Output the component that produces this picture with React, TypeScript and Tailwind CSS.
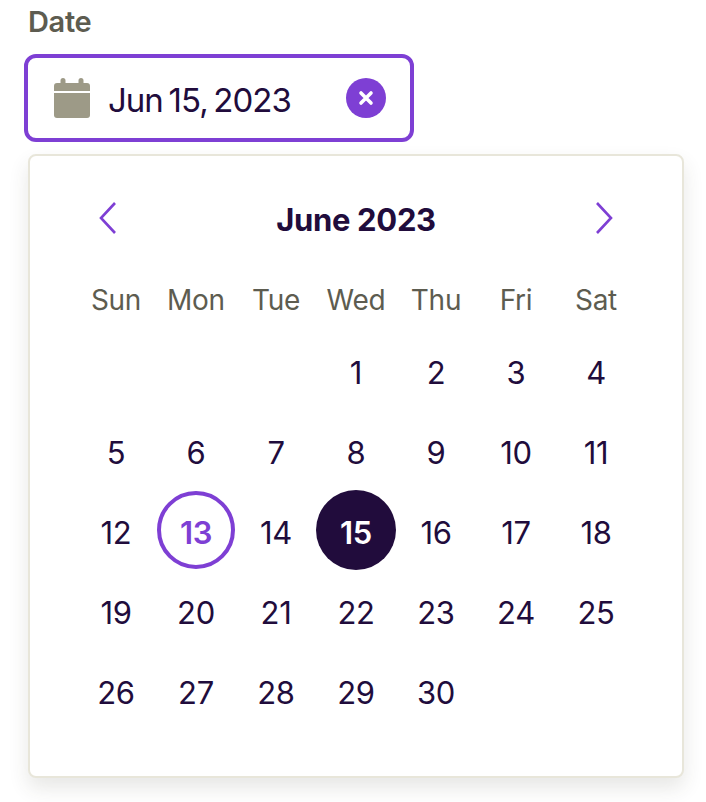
const weekdays = ['Sun', 'Mon', 'Tue', 'Wed', 'Thu', 'Fri', 'Sat'];

const days: (number | null)[] = [null, null, null, ...Array.from({ length: 30 }, (_, i) => i + 1)];

const Day = ({ day }: { day: number | null }) => {
  if (day === null) return <div className="h-20" />;
  if (day === 13) {
    return (
      <div className="h-20 flex items-center justify-center">
        <span className="w-[78px] h-[78px] -mt-1 pt-1 rounded-full border-4 border-[#7e3fd4] flex items-center justify-center font-semibold text-[#7e3fd4]">
          {day}
        </span>
      </div>
    );
  }
  if (day === 15) {
    return (
      <div className="h-20 flex items-center justify-center">
        <span className="w-20 h-20 -mt-1 pt-1 rounded-full bg-[#210c3c] flex items-center justify-center font-semibold text-white">
          {day}
        </span>
      </div>
    );
  }
  return <div className="h-20 flex items-center justify-center text-[#210c3c]">{day}</div>;
};

export default function App() {
  return (
    <div className="w-[706px] h-[802px] overflow-hidden bg-white pl-6 font-['Inter',sans-serif] tracking-[-0.02em]">
      <div className="pl-[4px] h-[54px] pt-[5px] text-[29px] leading-[34px] font-semibold text-[#5d5c50]">Date</div>

      <div className="w-[390px] h-[88px] border-4 border-[#7e3fd4] rounded-xl flex items-center pl-[26px] pr-[24px]">
        <svg width="36" height="40" viewBox="0 0 36 40" className="shrink-0 -mt-px">
          <path
            d="M9 0a2.5 2.5 0 0 1 2.5 2.5V5h13V2.5a2.5 2.5 0 0 1 5 0V5H33a3 3 0 0 1 3 3v5H0V8a3 3 0 0 1 3-3h3.5V2.5A2.5 2.5 0 0 1 9 0z"
            fill="#9d9a87"
          />
          <path d="M0 15h36v22a3 3 0 0 1-3 3H3a3 3 0 0 1-3-3z" fill="#9d9a87" />
        </svg>
        <span className="ml-[18px] pt-1 text-[33px] leading-none text-[#210c3c] tracking-[-0.03em] [word-spacing:-0.08em]">Jun 15, 2023</span>
        <span className="ml-auto w-10 h-10 rounded-full bg-[#7e3fd4] flex items-center justify-center">
          <svg width="16" height="16" viewBox="0 0 16 16" fill="none" stroke="white" strokeWidth="3.6" strokeLinecap="round">
            <path d="M3 3l10 10M13 3L3 13" />
          </svg>
        </span>
      </div>

      <div className="ml-1 mt-3 w-[656px] h-[624px] bg-white border-2 border-[#e8e6da] rounded-lg shadow-[0_10px_20px_rgba(60,60,40,0.12)] px-[46px]">
        <div className="h-[126px] pt-[45px] flex items-start justify-between">
          <svg width="20" height="34" viewBox="0 0 20 34" fill="none" stroke="#7e3fd4" strokeWidth="2.6" className="ml-[22px]">
            <path d="M17 2L3 17l14 15" />
          </svg>
          <span className="-mt-px text-[31px] leading-10 font-bold text-[#210c3c]">June 2023</span>
          <svg width="20" height="34" viewBox="0 0 20 34" fill="none" stroke="#7e3fd4" strokeWidth="2.6" className="mr-[22px]">
            <path d="M3 2l14 15L3 32" />
          </svg>
        </div>

        <div className="grid grid-cols-7 h-[36px] items-center text-center text-[28px] leading-none tracking-[-0.01em] text-[#5d5c50]">
          {weekdays.map((d) => (
            <div key={d}>{d}</div>
          ))}
        </div>

        <div className="grid grid-cols-7 mt-[14px] text-[31px] leading-none">
          {days.map((day, i) => (
            <Day key={i} day={day} />
          ))}
        </div>
      </div>
    </div>
  );
}
